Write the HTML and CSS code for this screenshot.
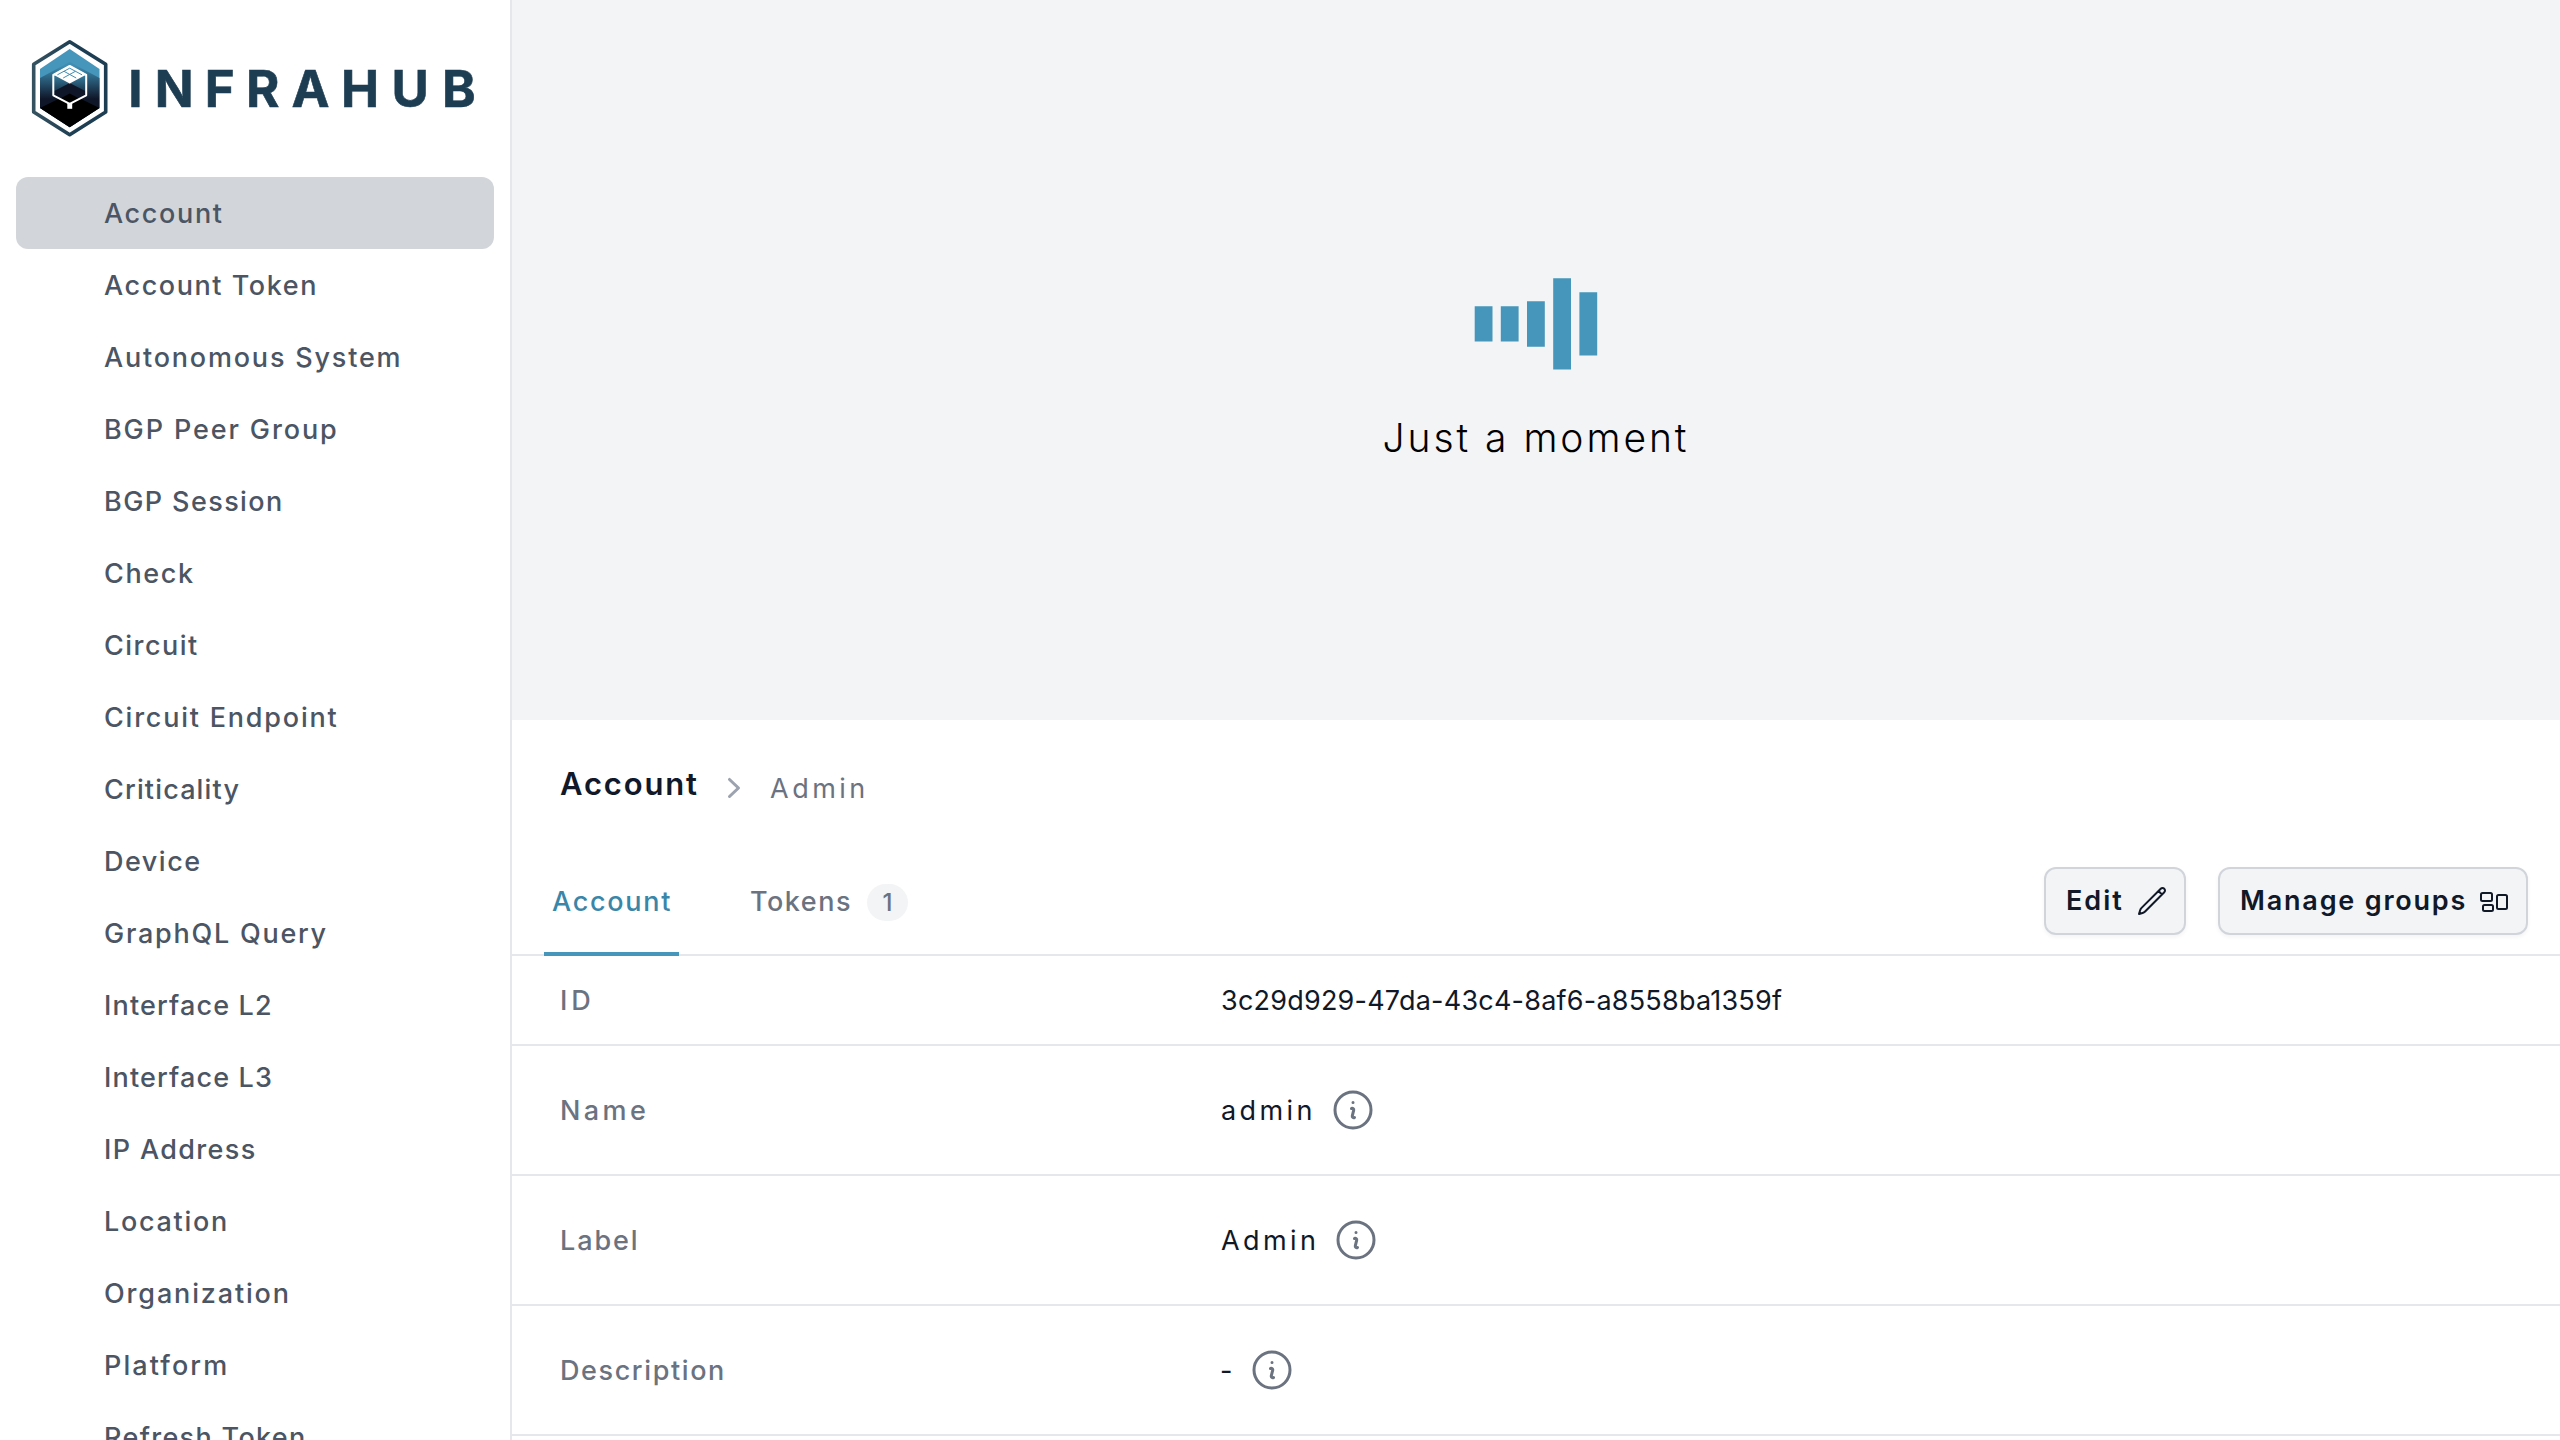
FILE: index.html
```html
<!DOCTYPE html>
<html lang="en">
<head>
<meta charset="utf-8">
<title>Infrahub</title>
<link rel="stylesheet" href="styles.css">
</head>
<body>
<svg class="sprite" aria-hidden="true">
  <symbol id="info" viewBox="0 0 24 24"><path d="M11.25 11.25l.041-.02a.75.75 0 011.063.852l-.708 2.836a.75.75 0 001.063.853l.041-.021M21 12a9 9 0 11-18 0 9 9 0 0118 0zm-9-3.75h.008v.008H12V8.25z"/></symbol>
</svg>
<div class="app">
  <aside class="sidebar">
    <svg class="logo" viewBox="0 0 510 177" role="img" aria-label="Infrahub">
      <defs>
        <linearGradient id="mid" x1="0" y1="66" x2="0" y2="99" gradientUnits="userSpaceOnUse"><stop offset="0" stop-color="#3f8db2"/><stop offset=".3" stop-color="#2f6b8a"/><stop offset="1" stop-color="#0f1628"/></linearGradient>
        <linearGradient id="face" x1="0" y1="74" x2="0" y2="95" gradientUnits="userSpaceOnUse"><stop offset="0" stop-color="#3a83a5"/><stop offset="1" stop-color="#12263a"/></linearGradient>
        <linearGradient id="ring" x1="0" y1="0" x2="1" y2="0"><stop offset="0" stop-color="#34525f"/><stop offset=".6" stop-color="#1d3d53"/></linearGradient>
      </defs>
      <path d="M69.7 41.8 105.7 64.3V112L69.7 134.7 33.7 112V64.3Z" fill="#fff" stroke="url(#ring)" stroke-width="3.6" stroke-linejoin="round"/>
      <path d="M69.7 49 99.5 69V108L69.7 127.3 40 108V69Z" fill="#4695ba"/>
      <path d="M69.7 62 99.5 78V108L69.7 127.3 40 108V78Z" fill="url(#mid)"/>
      <path d="M69.7 93.5 99.5 108 69.7 127.3 40 108Z" fill="#000"/>
      <path d="M53.3 75 69.7 84 86.2 75V95.5L69.7 104 53.3 95.5Z" fill="#0f1628"/>
      <path d="M53.3 75H86.2V91.5L69.7 83 53.3 91.5Z" fill="url(#face)"/>
      <path d="M69.7 93.5 80 99 69.7 104 59.5 99Z" fill="#000"/>
      <path d="M69.7 66 86.2 75V95.3L69.7 103.8 53.3 95.3V75Z" fill="none" stroke="#fff" stroke-width="2" stroke-linejoin="round"/>
      <path d="M69.7 65.5 86.5 74.5 69.7 83.5 53 74.5Z" fill="#fff"/>
      <path d="M69.7 68.2 82 74.8M69.7 68.2 57.4 74.8M64 71.3 76.2 78M75.4 71.3 63.2 78" fill="none" stroke="#3f8db2" stroke-width="1"/>
      <path d="M67.3 103H72.2V108.8H67.3Z" fill="#fff"/>
      <text class="wordmark" y="107" x="128.3 154.7 204.7 246 291.5 341 391.5 442">INFRAHUB</text>
    </svg>
    <nav class="menu">
      <a class="item active">Account</a>
      <a class="item">Account Token</a>
      <a class="item">Autonomous System</a>
      <a class="item">BGP Peer Group</a>
      <a class="item">BGP Session</a>
      <a class="item">Check</a>
      <a class="item">Circuit</a>
      <a class="item">Circuit Endpoint</a>
      <a class="item">Criticality</a>
      <a class="item">Device</a>
      <a class="item">GraphQL Query</a>
      <a class="item">Interface L2</a>
      <a class="item">Interface L3</a>
      <a class="item">IP Address</a>
      <a class="item">Location</a>
      <a class="item">Organization</a>
      <a class="item">Platform</a>
      <a class="item">Refresh Token</a>
    </nav>
  </aside>
  <main class="main">
    <section class="loading">
      <svg class="bars" width="124" height="92" viewBox="0 0 124 92"><path d="M.7 28.2h17.8v35.4H.7zM26.8 28.2h17.8v35.4H26.8zM53 23.2h17.8v45.6H53zM79.2 .2H97v91.4H79.2zM105.4 14.2h17.8v63.4h-17.8z"/></svg>
      <p class="loading-text">Just a moment</p>
    </section>
    <section class="details">
      <header class="crumbs">
        <h1 class="title">Account</h1>
        <svg class="chevron" width="40" height="40" viewBox="0 0 20 20"><path d="M7.21 14.77a.75.75 0 01.02-1.06L11.168 10 7.23 6.29a.75.75 0 111.04-1.08l4.5 4.25a.75.75 0 010 1.08l-4.5 4.25a.75.75 0 01-1.06-.02z"/></svg>
        <span class="crumb">Admin</span>
      </header>
      <div class="toolbar">
        <div class="tabs">
          <a class="tab current">Account</a>
          <a class="tab tokens">Tokens<span class="badge">1</span></a>
        </div>
        <div class="actions">
          <button class="btn">Edit<svg class="icon" viewBox="0 0 24 24"><path d="M16.862 4.487l1.687-1.688a1.875 1.875 0 112.652 2.652L6.832 19.82a4.5 4.5 0 01-1.897 1.13l-2.685.8.8-2.685a4.5 4.5 0 011.13-1.897L16.863 4.487zm0 0L19.5 7.125"/></svg></button>
          <button class="btn wide">Manage groups<svg class="icon" viewBox="0 0 24 24"><path d="M2.25 7.125C2.25 6.504 2.754 6 3.375 6h6c.621 0 1.125.504 1.125 1.125v3.75c0 .621-.504 1.125-1.125 1.125h-6a1.125 1.125 0 01-1.125-1.125v-3.75zM14.25 8.625c0-.621.504-1.125 1.125-1.125h5.25c.621 0 1.125.504 1.125 1.125v8.25c0 .621-.504 1.125-1.125 1.125h-5.25a1.125 1.125 0 01-1.125-1.125v-8.25zM3.75 16.125c0-.621.504-1.125 1.125-1.125h5.25c.621 0 1.125.504 1.125 1.125v2.25c0 .621-.504 1.125-1.125 1.125h-5.25a1.125 1.125 0 01-1.125-1.125v-2.25z"/></svg></button>
        </div>
      </div>
      <dl class="fields">
        <div class="row compact"><dt class="label id">ID</dt><dd class="value"><span class="uuid">3c29d929-47da-43c4-8af6-a8558ba1359f</span></dd></div>
        <div class="row"><dt class="label name">Name</dt><dd class="value"><span class="text w-name">admin</span><svg class="info"><use href="#info"/></svg></dd></div>
        <div class="row"><dt class="label lab">Label</dt><dd class="value"><span class="text w-label">Admin</span><svg class="info"><use href="#info"/></svg></dd></div>
        <div class="row"><dt class="label">Description</dt><dd class="value"><span class="text w-desc">-</span><svg class="info"><use href="#info"/></svg></dd></div>
      </dl>
    </section>
  </main>
</div>
</body>
</html>
```
FILE: styles.css
```css
* { box-sizing: border-box; }
body { margin: 0; font-family: Inter, "Liberation Sans", sans-serif; font-size: 27px; line-height: 40px; background: #f3f4f6; }
.sprite { display: none; }
.app { display: flex; width: 2560px; height: 1440px; overflow: hidden; }

.sidebar { flex: none; width: 512px; background: #fff; border-right: 2px solid #e5e7eb; }
.logo { display: block; width: 510px; height: 177px; }
.wordmark { font-size: 51px; font-weight: 700; fill: #1d3d53; stroke: #1d3d53; stroke-width: .6; }
.menu { display: flex; flex-direction: column; padding: 0 16px; }
.item { flex: none; height: 72px; padding: 1px 0 0 88px; line-height: 72px; border-radius: 12px; font-weight: 470; letter-spacing: 1.65px; color: #4b5563; white-space: nowrap; }
.item.active { background: #d2d5da; }
.item:nth-child(2) { letter-spacing: 1.56px; }
.item:nth-child(3) { letter-spacing: 1.8px; }
.item:nth-child(4) { letter-spacing: 1.88px; }
.item:nth-child(5) { letter-spacing: 1.41px; }
.item:nth-child(7) { letter-spacing: 1.47px; }
.item:nth-child(8) { letter-spacing: 1.78px; }
.item:nth-child(9) { letter-spacing: 1.15px; }
.item:nth-child(10) { letter-spacing: 1.5px; }
.item:nth-child(11) { letter-spacing: 1.74px; }
.item:nth-child(12), .item:nth-child(13) { letter-spacing: 1.15px; }
.item:nth-child(14) { letter-spacing: 1.35px; }
.item:nth-child(15) { letter-spacing: 1.7px; }
.item:nth-child(16) { letter-spacing: 1.84px; }
.item:nth-child(17) { letter-spacing: 2.1px; }
.item:nth-child(18) { letter-spacing: 1.32px; }

.main { flex: 1; display: flex; flex-direction: column; }
.loading { height: 720px; padding-top: 278px; display: flex; flex-direction: column; align-items: center; }
.bars { display: block; fill: #4695ba; }
.loading-text { margin: 44px 0 0; font-size: 39px; line-height: 48px; font-weight: 350; letter-spacing: 2.95px; color: #000; }

.details { flex: 1; background: #fff; color: #111827; }
.crumbs { display: flex; align-items: center; height: 132px; padding: 4px 0 0 48px; }
.title { margin: -8px 0 0; width: 154px; font-size: 31px; font-weight: 600; letter-spacing: 1.85px; }
.chevron { fill: #9ca3af; }
.crumb { margin: 1px 0 0 16px; letter-spacing: 3.5px; font-weight: 370; color: #6b7280; }

.toolbar { display: flex; justify-content: space-between; height: 104px; border-bottom: 2px solid #e5e7eb; }
.tabs { display: flex; margin-left: 32px; }
.tab { display: flex; align-items: center; height: 104px; font-weight: 470; letter-spacing: 1.72px; color: #6b7280; }
.tab.current { width: 135px; padding-left: 8px; border-bottom: 4px solid #4695ba; color: #3a86a8; }
.tab.tokens { margin-left: 71px; letter-spacing: 1.5px; padding-bottom: 4px; }
.badge { width: 41px; height: 37px; margin-left: 15px; border-radius: 19px; background: #f3f4f6; font-size: 24px; line-height: 37px; letter-spacing: 0; text-align: center; }
.actions { display: flex; gap: 32px; padding: 15px 32px 0 0; }
.btn { display: flex; align-items: center; justify-content: space-between; width: 142px; height: 68px; padding: 0 16px 0 20px; border: 2px solid #d1d5db; border-radius: 12px; background: #f3f4f6; box-shadow: 0 2px 4px rgba(0,0,0,.05); font: 600 27px/40px Inter, "Liberation Sans", sans-serif; letter-spacing: 2px; color: #111827; white-space: nowrap; }
.btn.wide { width: 310px; letter-spacing: 1.8px; }
.icon { flex: none; width: 32px; height: 32px; fill: none; stroke: currentColor; stroke-width: 1.5; stroke-linecap: round; stroke-linejoin: round; }

.fields { margin: 0; }
.row { display: flex; height: 130px; padding-left: 48px; border-bottom: 2px solid #e5e7eb; align-items: center; }
.row.compact { height: 90px; }
.label { width: 660px; padding-top: 2px; font-weight: 470; letter-spacing: 1.6px; color: #6b7280; }
.label.id { letter-spacing: 4px; }
.label.name { letter-spacing: 3.4px; }
.label.lab { letter-spacing: 1.9px; }
.value { display: flex; align-items: center; margin: 0; }
.uuid { padding: 2px 0 0 1px; letter-spacing: .22px; }
.text { letter-spacing: 3.4px; padding: 1px 0 0 1px; }
.w-name { width: 109px; }
.w-label { width: 112px; }
.w-desc { width: 28px; padding-left: 0; }
.info { width: 48px; height: 48px; fill: none; stroke: #6b7280; stroke-width: 1.5; stroke-linecap: round; stroke-linejoin: round; }
```
